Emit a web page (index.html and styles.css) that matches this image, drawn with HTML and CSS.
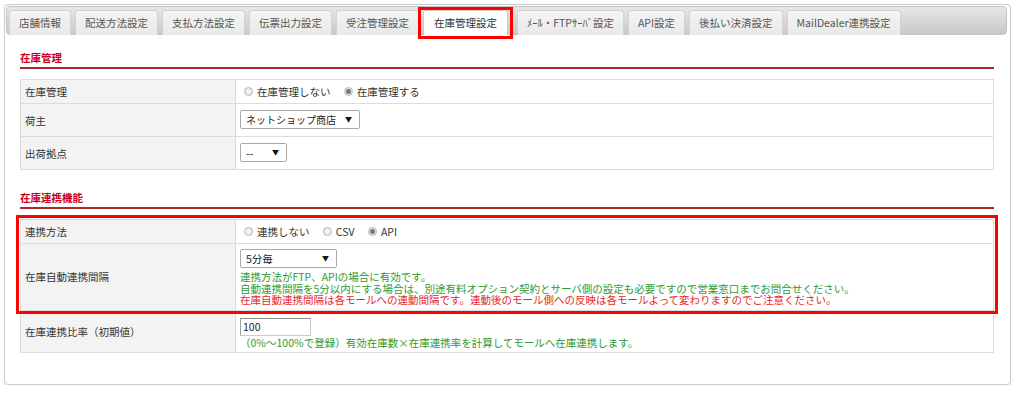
FILE: index.html
```html
<!DOCTYPE html>
<html lang="ja">
  <head>
    <meta charset="UTF-8" />
    <meta name="viewport" content="width=device-width, initial-scale=1.0" />
    <title>在庫管理設定</title>
    <link rel="stylesheet" href="styles.css">
  </head>
  <body>
    <div class="panel">
      <ul class="tabs">
        <li class="tab">店舗情報</li>
        <li class="tab">配送方法設定</li>
        <li class="tab">支払方法設定</li>
        <li class="tab">伝票出力設定</li>
        <li class="tab">受注管理設定</li>
        <li class="tab active">在庫管理設定</li>
        <li class="tab">ﾒｰﾙ・FTPｻｰﾊﾞ設定</li>
        <li class="tab">API設定</li>
        <li class="tab">後払い決済設定</li>
        <li class="tab">MailDealer連携設定</li>
      </ul>

      <div class="content">
        <h2 class="section-title">在庫管理</h2>
        <table class="form-table">
          <tr class="row-plain">
            <th>在庫管理</th>
            <td>
              <label class="radio"><input type="radio" name="stock" />在庫管理しない</label>
              <label class="radio"><input type="radio" name="stock" checked />在庫管理する</label>
            </td>
          </tr>
          <tr class="row-select">
            <th>荷主</th>
            <td><span class="select sel-shop">ネットショップ商店<i>▼</i></span></td>
          </tr>
          <tr class="row-select">
            <th>出荷拠点</th>
            <td><span class="select sel-base">--<i>▼</i></span></td>
          </tr>
        </table>

        <h2 class="section-title">在庫連携機能</h2>
        <div class="marked">
          <table class="form-table">
            <tr class="row-plain">
              <th>連携方法</th>
              <td>
                <label class="radio"><input type="radio" name="link" />連携しない</label>
                <label class="radio"><input type="radio" name="link" />CSV</label>
                <label class="radio"><input type="radio" name="link" checked />API</label>
              </td>
            </tr>
            <tr class="row-interval">
              <th>在庫自動連携間隔</th>
              <td>
                <span class="select sel-interval">5分毎<i>▼</i></span>
                <p class="note green">連携方法がFTP、APIの場合に有効です。</p>
                <p class="note green">自動連携間隔を5分以内にする場合は、別途有料オプション契約とサーバ側の設定も必要ですので営業窓口までお問合せください。</p>
                <p class="note red">在庫自動連携間隔は各モールへの連動間隔です。連動後のモール側への反映は各モールよって変わりますのでご注意ください。</p>
              </td>
            </tr>
            <tr class="row-rate">
              <th>在庫連携比率（初期値）</th>
              <td>
                <input class="text-input" type="text" value="100" />
                <p class="note green">（0%～100%で登録）有効在庫数×在庫連携率を計算してモールへ在庫連携します。</p>
              </td>
            </tr>
          </table>
          <div class="mark-box"></div>
        </div>
      </div>
    </div>
  </body>
</html>
```

FILE: styles.css
```css
body {
  margin: 0;
  background: #fff;
  font-family: "Noto Sans CJK JP", "Noto Sans", sans-serif;
  font-size: 10.5px;
  color: #333;
}

.panel {
  box-sizing: border-box;
  width: 1007px;
  height: 381px;
  margin: 4px 0 0 4px;
  padding: 1px;
  border: 1px solid #c9c9c9;
  border-radius: 4px;
  box-shadow: 0 1px 1px rgba(0, 0, 0, 0.12);
}

/* tabs */
.tabs {
  display: flex;
  gap: 4px;
  box-sizing: border-box;
  width: 1001px;
  height: 29px;
  margin: 0;
  padding: 3px 2px 0;
  list-style: none;
  border: 1px solid #c4c4c4;
  border-radius: 4px;
  background: linear-gradient(#e8e8e8, #c8c8c8);
}

.tab {
  position: relative;
  height: 25px;
  box-sizing: border-box;
  padding: 0 9px;
  line-height: 24px;
  color: #555;
  white-space: nowrap;
  border: 1px solid #d2d2d2;
  border-bottom: none;
  border-radius: 3px 3px 0 0;
  background: linear-gradient(#f4f4f4, #e9e9e9);
}

.tab.active {
  padding: 0 10px;
  color: #333;
  background: #fff;
  border-color: #cfcfcf;
}

.tab.active::after {
  content: "";
  position: absolute;
  top: -4px;
  left: -6px;
  right: -6px;
  bottom: -4px;
  border: 3px solid #f00;
}

.tab.active + .tab {
  margin-left: 5px;
}

/* content */
.content {
  padding: 0 15px 0 14px;
}

.section-title {
  margin: 15px 0 10px;
  padding: 0 0 1px;
  font-size: 10.5px;
  line-height: 16px;
  font-weight: bold;
  color: #c8001e;
  border-bottom: 2px solid #a82a2e;
}

.form-table {
  width: 100%;
  border-collapse: collapse;
  border: 1px solid #dcdcdc;
}

.form-table + .section-title {
  margin-top: 20px;
}

.form-table th,
.form-table td {
  border: 1px solid #dcdcdc;
  padding: 5px 4px;
  line-height: 13px;
  text-align: left;
  font-weight: normal;
  vertical-align: middle;
}

.form-table th {
  width: 206px;
  background: #f3f3f3;
}

.row-select td {
  padding: 6px 4px 7px;
}

.row-interval td {
  padding: 5px 4px 4px;
}

.row-rate td {
  padding: 7px 4px 4px;
}

/* radios */
.radio {
  display: inline-flex;
  align-items: center;
  margin-right: 7px;
}

.radio input {
  appearance: none;
  width: 9px;
  height: 9px;
  margin: 0 4px 0 4px;
  border: 1px solid #b9b9b9;
  border-radius: 50%;
  background: radial-gradient(circle, #f6f6f6 0, #e2e2e2 100%);
}

.radio input:checked {
  background: radial-gradient(circle, #7a7a7a 0 2px, #e6e6e6 3px);
}

/* selects */
.select {
  display: inline-flex;
  justify-content: space-between;
  align-items: center;
  gap: 6px;
  box-sizing: border-box;
  height: 19px;
  padding: 0 7px 0 5px;
  border: 1px solid #a9a9a9;
  border-radius: 2px;
  background: #fff;
  color: #222;
  vertical-align: middle;
}

.select i {
  font-style: normal;
  font-size: 7px;
  color: #111;
}

.sel-shop {
  width: 120px;
  font-size: 10px;
}

.sel-base {
  width: 47px;
}

.sel-interval {
  width: 97px;
  margin-bottom: 3px;
}

.note {
  margin: 0;
  line-height: 11.5px;
}

.green {
  color: #2f9a2f;
}

.red {
  color: #e8262c;
}

.text-input {
  display: block;
  box-sizing: border-box;
  width: 71px;
  height: 18px;
  margin: 0 0 1px;
  padding: 0 2px;
  font-family: inherit;
  font-size: 10.5px;
  color: #222;
  border: 1px solid #c9c9c9;
  border-top-color: #8e8e8e;
  border-left-color: #a0a0a0;
}

/* annotation box over the linked settings */
.marked {
  position: relative;
}

.mark-box {
  position: absolute;
  top: -4px;
  left: -4px;
  right: -4px;
  height: 99px;
  box-sizing: border-box;
  border: 3px solid #f00;
}
```
